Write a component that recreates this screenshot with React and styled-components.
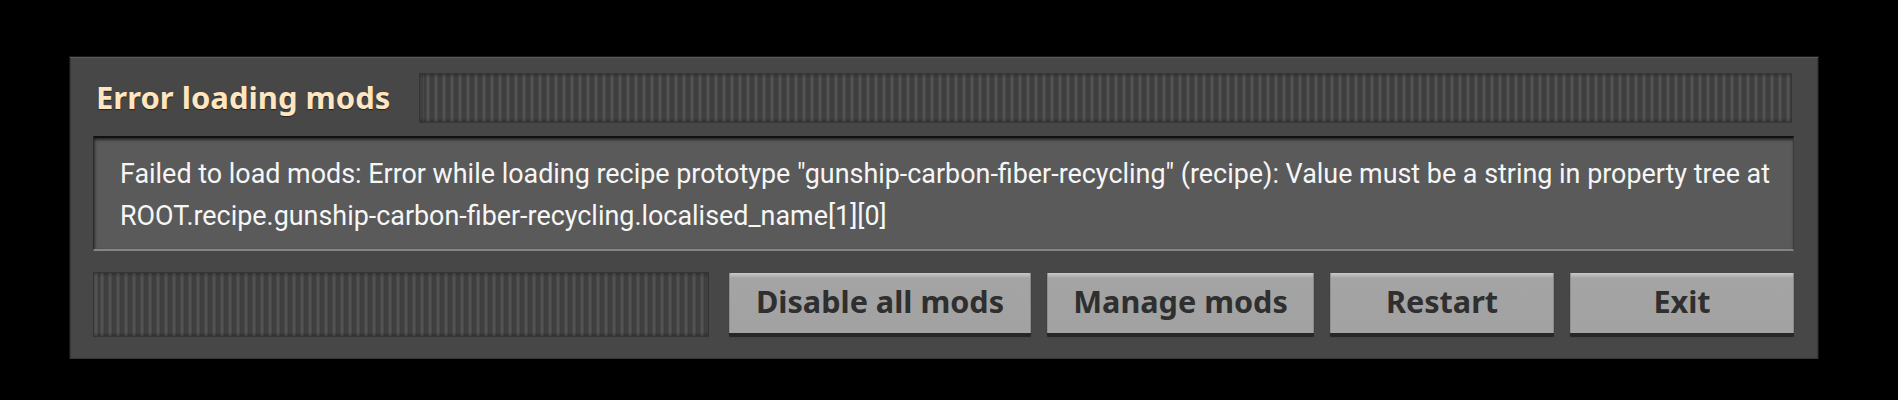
import React from "react";
import styled, { createGlobalStyle } from "styled-components";

const Global = createGlobalStyle`
  html, body { margin: 0; padding: 0; background: #000; }
  body { font-family: "Noto Sans", sans-serif; }
`;

const Page = styled.div`
  padding: 57px 0 0 70px;
`;

const Frame = styled.div`
  box-sizing: border-box;
  width: 1748px;
  height: 302px;
  padding: 15px 24px 22px 23px;
  background: #474747;
  border-top: 1px solid #5e5c5b;
  box-shadow: inset 1px 0 0 #3b3636, inset -1px 0 0 #3b3636, inset 0 -1px 0 #3b3636,
    0 0 0 1px #1a1818;
  display: flex;
  flex-direction: column;
`;

const TitleRow = styled.div`
  display: flex;
  align-items: center;
  height: 50px;
  gap: 29px;
`;

const Title = styled.h1`
  margin: -3px 0 0 3px;
  font-family: "Noto Sans", sans-serif;
  font-weight: 700;
  font-size: 31px;
  line-height: 50px;
  color: #ffe6c0;
  white-space: nowrap;
  text-shadow: 0 1px 1px rgba(0, 0, 0, 0.5);
`;

const Filler = styled.div`
  flex: ${(p) => (p.$grow ? 1 : "none")};
  height: ${(p) => p.$height}px;
  margin-right: ${(p) => p.$mr || 0}px;
  box-sizing: border-box;
  border: 1px solid #3a3333;
  background:
    linear-gradient(180deg, rgba(0,0,0,0.22) 0, rgba(0,0,0,0) 4px, rgba(0,0,0,0) calc(100% - 4px), rgba(0,0,0,0.22) 100%),
    repeating-linear-gradient(
      90deg,
      #3f3f3f 0px,
      #3f3f3f 2px,
      #525252 3px,
      #545454 5px,
      #3f3f3f 6px,
      #3f3f3f 8px
    );
  background-position: 0 0, 4px 0;
`;

const MessageBox = styled.div`
  box-sizing: border-box;
  margin-top: 13px;
  height: 116px;
  padding: 15px 8px 0 26px;
  background: #5a5a5a;
  border-top: 2px solid #121212;
  border-left: 1px solid #2c2c2c;
  border-right: 1px solid #3a3a3a;
  border-bottom: 2px solid #858585;
  box-shadow: inset 0 3px 3px -1px rgba(0, 0, 0, 0.55), inset 2px 0 3px -1px rgba(0, 0, 0, 0.4);
`;

const Message = styled.p`
  margin: 0;
  font-family: Roboto, "Noto Sans", sans-serif;
  font-weight: 400;
  font-size: 26.9px;
  line-height: 42px;
  color: #f6f6f6;
`;

const ActionRow = styled.div`
  display: flex;
  align-items: center;
  gap: 16px;
  margin-top: 21px;
  height: 65px;
`;

const Button = styled.button`
  box-sizing: border-box;
  width: ${(p) => p.$width}px;
  height: 63px;
  padding: 0 0 4px;
  font-family: "Noto Sans", sans-serif;
  font-weight: 700;
  font-size: 30.6px;
  color: #2f2f2f;
  background: linear-gradient(180deg, #c9c9c9 0, #b4b4b4 3px, #a4a4a4 5px, #a2a2a2 100%);
  border: none;
  border-bottom: 3px solid #262626;
  border-radius: 1px;
  box-shadow: inset 1px 0 0 #8f8f8f, inset -1px 0 0 #8a8a8a, 0 1px 1px rgba(0, 0, 0, 0.5);
  cursor: pointer;
  white-space: nowrap;
`;

export default function App() {
  return (
    <>
      <Global />
      <Page>
        <Frame>
          <TitleRow>
            <Title>Error loading mods</Title>
            <Filler $grow $height={50} $mr={2} />
          </TitleRow>
          <MessageBox>
            <Message>
              Failed to load mods: Error while loading recipe prototype "gunship-carbon-fiber-recycling"
              (recipe): Value must be a string in property tree at
              ROOT.recipe.gunship-carbon-fiber-recycling.localised_name[1][0]
            </Message>
          </MessageBox>
          <ActionRow>
            <Filler $grow $height={65} $mr={4} />
            <Button $width={302}>Disable all mods</Button>
            <Button $width={267}>Manage mods</Button>
            <Button $width={224}>Restart</Button>
            <Button $width={224}>Exit</Button>
          </ActionRow>
        </Frame>
      </Page>
    </>
  );
}
